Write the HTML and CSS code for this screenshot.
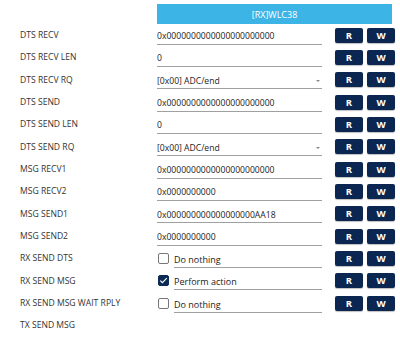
FILE: index.html
```html
<!DOCTYPE html>
<html>
<head>
<meta charset="utf-8">
<link rel="stylesheet" href="styles.css">
</head>
<body>
<div class="panel">
  <div class="header">[RX]WLC38</div>
  <div class="row"><div class="label">DTS RECV</div><div class="field">0x0000000000000000000000</div><div class="btns"><button class="btn">R</button><button class="btn">W</button></div></div>
  <div class="row"><div class="label">DTS RECV LEN</div><div class="field">0</div><div class="btns"><button class="btn">R</button><button class="btn">W</button></div></div>
  <div class="row"><div class="label">DTS RECV RQ</div><div class="field select"><span>[0x00] ADC/end</span><span class="arrow"></span></div><div class="btns"><button class="btn">R</button><button class="btn">W</button></div></div>
  <div class="row"><div class="label">DTS SEND</div><div class="field">0x0000000000000000000000</div><div class="btns"><button class="btn">R</button><button class="btn">W</button></div></div>
  <div class="row"><div class="label">DTS SEND LEN</div><div class="field">0</div><div class="btns"><button class="btn">R</button><button class="btn">W</button></div></div>
  <div class="row"><div class="label">DTS SEND RQ</div><div class="field select"><span>[0x00] ADC/end</span><span class="arrow"></span></div><div class="btns"><button class="btn">R</button><button class="btn">W</button></div></div>
  <div class="row"><div class="label">MSG RECV1</div><div class="field">0x0000000000000000000000</div><div class="btns"><button class="btn">R</button><button class="btn">W</button></div></div>
  <div class="row"><div class="label">MSG RECV2</div><div class="field">0x0000000000</div><div class="btns"><button class="btn">R</button><button class="btn">W</button></div></div>
  <div class="row"><div class="label">MSG SEND1</div><div class="field">0x000000000000000000AA18</div><div class="btns"><button class="btn">R</button><button class="btn">W</button></div></div>
  <div class="row"><div class="label">MSG SEND2</div><div class="field">0x0000000000</div><div class="btns"><button class="btn">R</button><button class="btn">W</button></div></div>
  <div class="row"><div class="label">RX SEND DTS</div><div class="check"><span class="box"></span><span class="ctext">Do nothing</span></div><div class="btns"><button class="btn">R</button><button class="btn">W</button></div></div>
  <div class="row"><div class="label">RX SEND MSG</div><div class="check"><span class="box on"><svg viewBox="0 0 11 11" width="11" height="11"><path d="M2.3 5.6 L4.4 7.7 L8.8 3.2" fill="none" stroke="#fff" stroke-width="1.2"/></svg></span><span class="ctext">Perform action</span></div><div class="btns"><button class="btn">R</button><button class="btn">W</button></div></div>
  <div class="row"><div class="label">RX SEND MSG WAIT RPLY</div><div class="check"><span class="box"></span><span class="ctext">Do nothing</span></div><div class="btns"><button class="btn">R</button><button class="btn">W</button></div></div>
  <div class="row"><div class="label">TX SEND MSG</div></div>
</div>
</body>
</html>
```
FILE: styles.css
```css
html, body {
  margin: 0;
  padding: 0;
  background: #ffffff;
}
body {
  font-family: "Open Sans", "Noto Sans", sans-serif;
  color: #333333;
}
.panel {
  padding: 4px 0 0 20px;
}
.header {
  margin-left: 137px;
  width: 235px;
  height: 20px;
  background: #3cb4e6;
  color: #ffffff;
  font-size: 9px;
  display: flex;
  align-items: center;
  justify-content: center;
}
.row {
  height: 22.33px;
  display: grid;
  grid-template-columns: 137px 165px auto;
  align-items: center;
}
.label {
  font-size: 8.6px;
  color: #333333;
  white-space: nowrap;
}
.field {
  height: 16px;
  margin-top: 3px;
  box-sizing: border-box;
  border-bottom: 1px solid #a0a0a0;
  font-size: 8.6px;
  color: #222;
  display: flex;
  align-items: center;
}
.select {
  justify-content: space-between;
  padding-right: 2px;
}
.arrow {
  width: 0;
  height: 0;
  border-left: 2.5px solid transparent;
  border-right: 2.5px solid transparent;
  border-top: 2.5px solid #888;
}
.check {
  display: flex;
  align-items: center;
  gap: 5px;
  padding-left: 1px;
}
.box {
  width: 11px;
  height: 11px;
  box-sizing: border-box;
  border: 1px solid #777;
  border-radius: 2px;
  flex: none;
  display: flex;
}
.box.on {
  background: #0b2a55;
  border-color: #0b2a55;
}
.box svg {
  margin: -1px;
}
.ctext {
  flex: 1;
  height: 16px;
  margin-top: 3px;
  box-sizing: border-box;
  border-bottom: 1px solid #a0a0a0;
  font-size: 9px;
  color: #222;
  display: flex;
  align-items: center;
}
.btns {
  display: flex;
  gap: 4px;
  margin-left: 13px;
}
.btn {
  width: 28px;
  height: 15px;
  padding: 0;
  border: none;
  border-radius: 2px;
  background: #0b2650;
  color: #ffffff;
  font-family: "Open Sans", "Noto Sans", sans-serif;
  font-weight: bold;
  font-size: 9.5px;
  box-shadow: 0 1px 1px rgba(0,0,0,0.25);
}
```
